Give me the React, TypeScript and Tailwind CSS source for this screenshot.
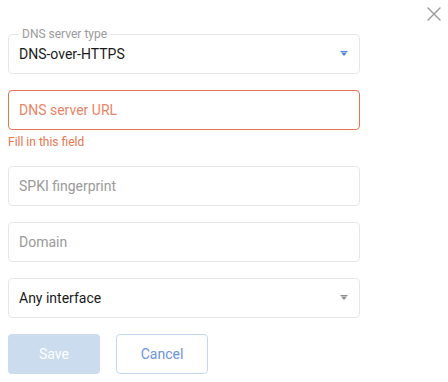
import { X } from "lucide-react";

const Caret = ({ color }: { color: string }) => (
  <svg width="8" height="6" viewBox="0 0 8 6" className="shrink-0">
    <path d="M0.5 0.5h7" stroke={color} strokeWidth="1" />
    <path d="M1 1.5h6L4 5z" fill={color} />
  </svg>
);

const Field = ({ placeholder }: { placeholder: string }) => (
  <div className="mb-4 flex h-10 items-center rounded border border-[#e6e6e6] px-[10px] text-sm text-[#9a9a9a]">
    {placeholder}
  </div>
);

export default function App() {
  return (
    <div className="flex w-[448px] bg-white pl-2 font-['Roboto',sans-serif]">
      <div className="w-[352px] pt-[34px]">
        {/* DNS server type select */}
        <div className="relative mb-4 flex h-10 items-center justify-between rounded border border-[#e6e6e6] px-[10px] text-sm text-[#1a1a1a]">
          <span className="absolute -top-[9px] left-[10px] bg-white px-[3px] text-xs leading-4 text-[#9a9a9a]">
            DNS server type
          </span>
          <span>DNS-over-HTTPS</span>
          <span className="mr-[1px]">
            <Caret color="#4a86e0" />
          </span>
        </div>

        {/* URL with error */}
        <div className="flex h-10 items-center rounded border border-[#e8744f] px-[10px] text-sm text-[#ea8468]">
          DNS server URL
        </div>
        <div className="mb-4 mt-1 text-xs leading-4 text-[#e8744f]">Fill in this field</div>

        <Field placeholder="SPKI fingerprint" />
        <Field placeholder="Domain" />

        <div className="mb-4 flex h-10 items-center justify-between rounded border border-[#e6e6e6] px-[10px] text-sm text-[#1a1a1a]">
          <span>Any interface</span>
          <span className="mr-[1px]">
            <Caret color="#8c8c8c" />
          </span>
        </div>

        <div className="flex gap-4">
          <button className="h-10 w-[92px] rounded bg-[#cadcee] text-sm text-white">Save</button>
          <button className="h-10 w-[92px] rounded border border-[#c5d7ef] bg-white text-sm text-[#6d93dc]">
            Cancel
          </button>
        </div>
      </div>
      <div className="ml-auto pr-[2px] pt-[2px]">
        <X size={24} strokeWidth={1.4} className="text-[#9a9a9a]" />
      </div>
    </div>
  );
}
